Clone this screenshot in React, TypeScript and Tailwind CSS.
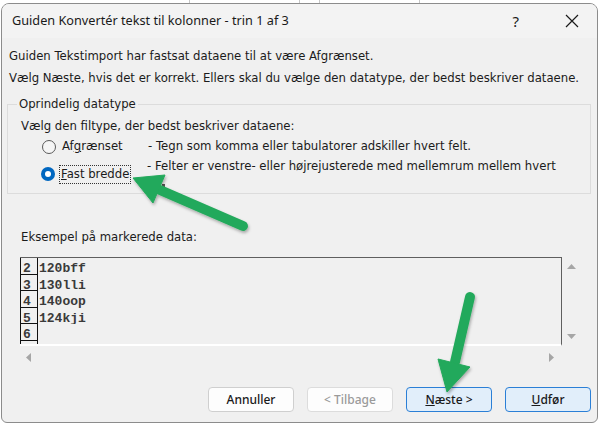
import React from 'react';

const body = { fontFamily: "Tahoma, 'DejaVu Sans', sans-serif" };
const mono = { fontFamily: "'Liberation Mono', 'Courier New', monospace" };

const rows = ['2', '3', '4', '5', '6', ''];
const data: Record<string, string> = { '2': '120bff', '3': '130lli', '4': '140oop', '5': '124kji' };

const Radio: React.FC<{ checked?: boolean }> = ({ checked }) =>
  checked ? (
    <span className="block w-[14px] h-[14px] rounded-full bg-[#0067c0] flex items-center justify-center">
      <span className="block w-[6px] h-[6px] rounded-full bg-white" />
    </span>
  ) : (
    <span className="block w-[14px] h-[14px] rounded-full border border-[#5a5a5a] bg-[#f5f5f5]" />
  );

const Tri: React.FC<{ dir: 'up' | 'down' | 'left' | 'right' }> = ({ dir }) => {
  const pts = {
    up: '1,7 5.5,2 10,7',
    down: '1,3 5.5,8 10,3',
    left: '7,1 2,5.5 7,10',
    right: '3,1 8,5.5 3,10',
  }[dir];
  return (
    <svg width="11" height="11" viewBox="0 0 11 11">
      <polygon points={pts} fill="#a6a6a6" />
    </svg>
  );
};

const App: React.FC = () => {
  return (
    <div className="relative w-[600px] h-[424px] bg-white overflow-hidden" style={body}>
      {/* sheet behind the dialog */}
      <div className="absolute top-0 left-0 w-full h-[4px] flex">
        <div className="w-[190px] border-r border-[#c8c8c8]" />
        <div className="w-[110px] border-r border-[#c8c8c8]" />
        <div className="w-[20px] border-r border-[#c8c8c8]" />
        <div className="w-[100px] border-r border-[#c8c8c8]" />
      </div>

      <div className="absolute left-[1px] top-[3px] w-[597px] h-[420px] rounded-t-[8px] rounded-b-[6px] border border-[#8c8c8c] bg-[#f0f0f0] flex flex-col overflow-hidden">
        {/* title bar */}
        <div className="h-[34px] bg-[#f3f3f3] flex items-center pl-[10px] pr-[18px] text-[#1a1a1a]">
          <span className="text-[12.7px] flex-1" style={{ fontFamily: "'Noto Sans', 'Open Sans', sans-serif" }}>
            Guiden Konvertér tekst til kolonner - trin 1 af 3
          </span>
          <span className="text-[15px] mr-[46px]" style={{ fontFamily: "'Noto Sans', sans-serif" }}>?</span>
          <svg width="14" height="14" viewBox="0 0 14 14">
            <path d="M1 1 L13 13 M13 1 L1 13" stroke="#1a1a1a" strokeWidth="1.2" />
          </svg>
        </div>

        <div className="flex-1 flex flex-col text-[11.7px] text-[#1b1b1b] px-[5px]">
          <div className="h-[22px] mt-[7px] leading-[22px] pl-[2px]">
            Guiden Tekstimport har fastsat dataene til at være Afgrænset.
          </div>
          <div className="h-[22px] leading-[22px] pl-[2px]">
            Vælg Næste, hvis det er korrekt. Ellers skal du vælge den datatype, der bedst beskriver dataene.
          </div>

          <fieldset className="mt-[7px] mr-[1px] h-[98px] border border-[#dcdcdc] pl-[13px] pr-2">
            <legend className="px-[2px] -ml-[4px] leading-[16px]">Oprindelig datatype</legend>
            <div className="h-[20px] leading-[20px] mt-[4px]">Vælg den filtype, der bedst beskriver dataene:</div>
            <div className="flex items-center h-[22px]">
              <div className="ml-[21px]"><Radio /></div>
              <span className="ml-[6px] w-[86px]">
                Af<span className="underline">g</span>rænset
              </span>
              <span>- Tegn som komma eller tabulatorer adskiller hvert felt.</span>
            </div>
            <div className="flex items-start h-[30px]">
              <div className="ml-[20px] mt-[9px]"><Radio checked /></div>
              <span className="ml-[4px] mt-[7px] w-[88px]">
                <span className="inline-block border border-dotted border-[#333] px-[1px] leading-[17px]">
                  <span className="underline">F</span>ast bredde
                </span>
              </span>
              <div className="mt-[1px] w-[430px]">
                <div className="leading-[15px]">- Felter er venstre- eller højrejusterede med mellemrum mellem hvert</div>
                <div className="ml-[15px] mt-[10px] w-[3px] h-[3px] bg-[#555]" />
              </div>
            </div>
          </fieldset>

          <div className="h-[20px] leading-[20px] mt-[33px] pl-[14px]">Eksempel på markerede data:</div>

          {/* preview */}
          <div className="mt-[10px] flex">
            <div className="ml-[13px] w-[542px] h-[89px] border-t border-r border-[#5f5f5f] border-b-2 border-b-white overflow-hidden text-[13px] font-bold text-[#3a3a3a]" style={mono}>
              {rows.map((r, i) => (
                <div key={i} className="flex h-[16.6px] overflow-hidden">
                  <div className="w-[18px] border border-t-0 border-[#111] pl-[2px] shrink-0 leading-[21px]">{r}</div>
                  <div className="pl-[1px] leading-[21px]">{data[r] ?? ''}</div>
                </div>
              ))}
            </div>
            <div className="flex-1 flex flex-col items-center justify-between pt-[5px] pb-[4px] pr-[12px]">
              <Tri dir="up" />
              <Tri dir="down" />
            </div>
          </div>
          <div className="flex justify-between items-center h-[22px] pl-[17px] pr-[35px]">
            <Tri dir="left" />
            <Tri dir="right" />
          </div>

          {/* buttons */}
          <div className="mt-[19px] flex justify-end gap-[13px] pr-[1px] text-[12px]" style={{ fontFamily: "'Noto Sans', sans-serif" }}>
            <button className="w-[86px] h-[25px] rounded-[4px] border border-[#cfcfcf] bg-[#fdfdfd] text-[#1a1a1a] font-medium">
              Annuller
            </button>
            <button className="w-[86px] h-[25px] rounded-[4px] border border-[#dcdcdc] bg-[#fdfdfd] text-[#9a9a9a] font-medium">
              &lt; Tilbage
            </button>
            <button className="w-[86px] h-[25px] rounded-[4px] border-[1.5px] border-[#2b7fd6] bg-[#e1eefa] text-[#1a1a1a] font-medium">
              <span className="underline">N</span>æste &gt;
            </button>
            <button className="w-[86px] h-[25px] rounded-[4px] border-[1.5px] border-[#2b7fd6] bg-[#e1eefa] text-[#1a1a1a] font-medium">
              <span className="underline">U</span>dfør
            </button>
          </div>
        </div>
      </div>

      {/* green call-out arrows */}
      <svg className="absolute inset-0 pointer-events-none" width="600" height="424" viewBox="0 0 600 424">
        <defs>
          <filter id="sh" x="-20%" y="-20%" width="140%" height="140%">
            <feDropShadow dx="1" dy="2" stdDeviation="1.5" floodColor="#000" floodOpacity="0.3" />
          </filter>
        </defs>
        <g filter="url(#sh)" fill="#23a95b" stroke="#23a95b">
          <line x1="243" y1="226" x2="160" y2="190" strokeWidth="10" strokeLinecap="round" />
          <polygon points="133,178 165,175 153,203" strokeWidth="1" strokeLinejoin="round" />
          <line x1="470" y1="297" x2="455" y2="362" strokeWidth="10" strokeLinecap="round" />
          <polygon points="447,392 470,367 438,359" strokeWidth="1" strokeLinejoin="round" />
        </g>
      </svg>
    </div>
  );
};

export default App;
